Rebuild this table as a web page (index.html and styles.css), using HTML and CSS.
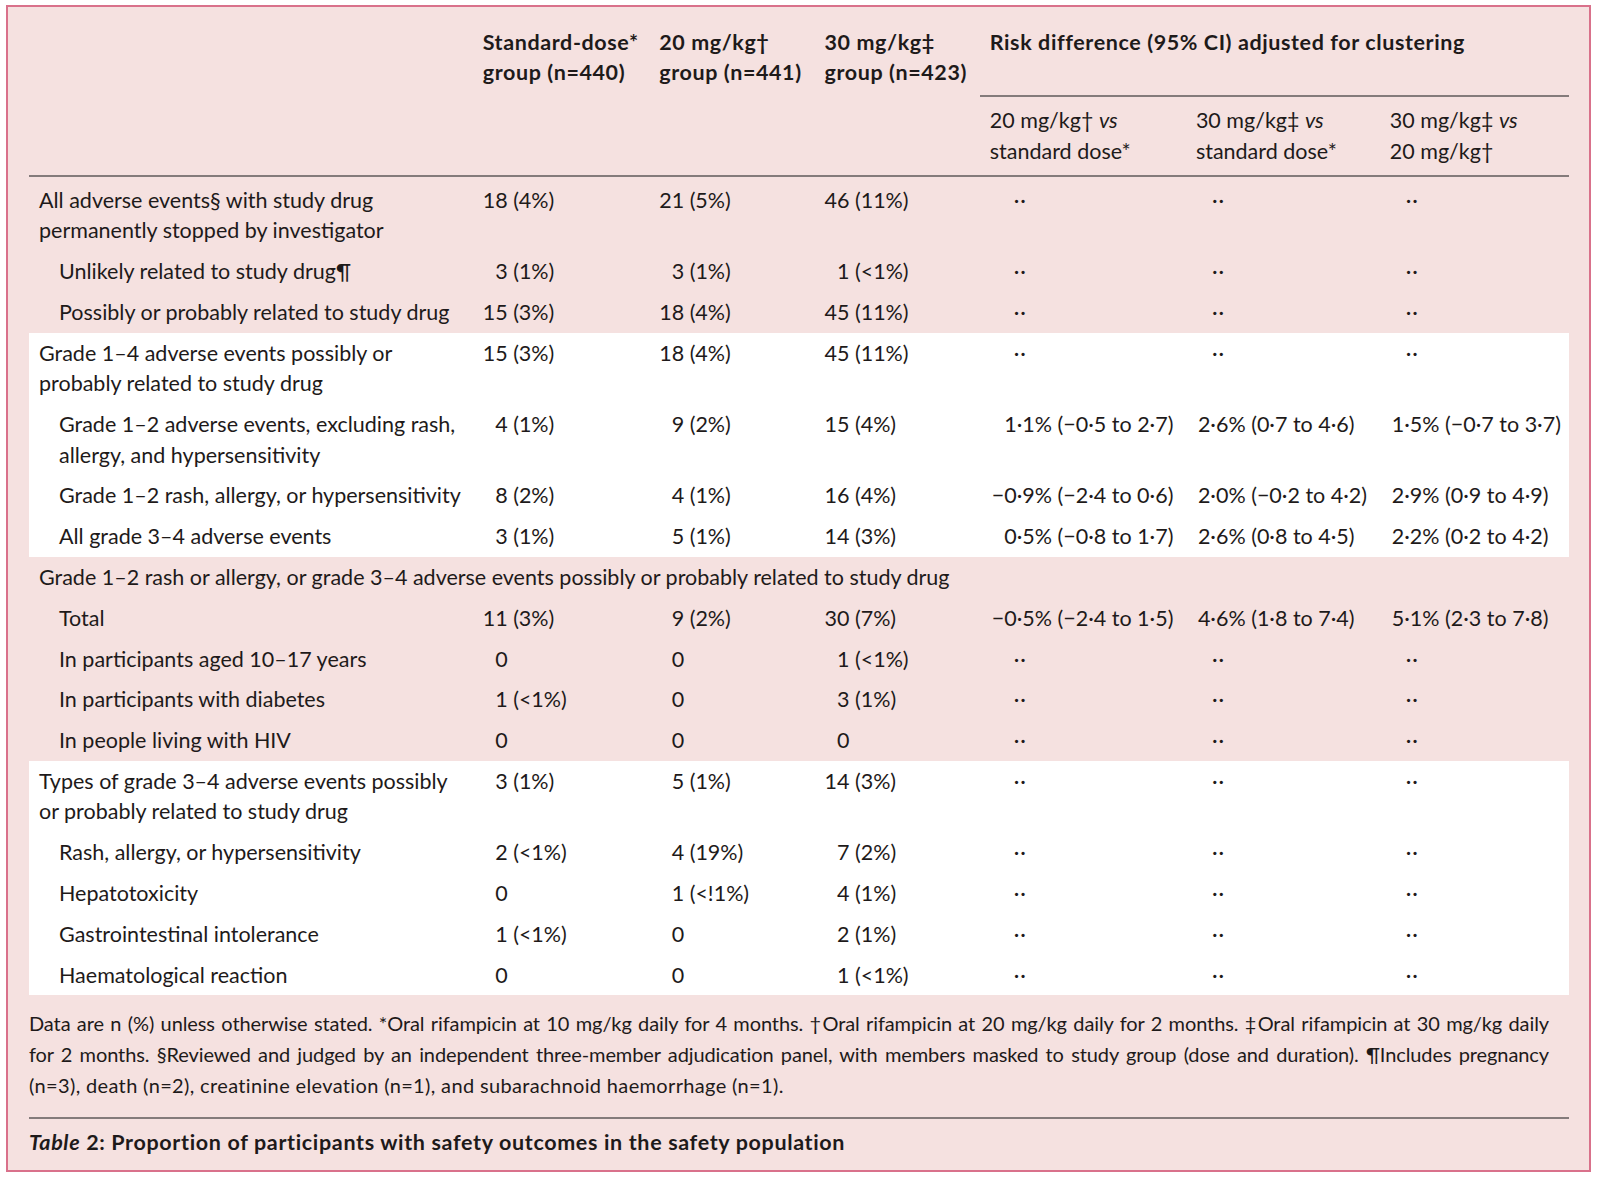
FILE: index.html
```html
<!DOCTYPE html>
<html lang="en">
<head>
<meta charset="utf-8">
<title>Table 2</title>
<link rel="stylesheet" href="styles.css">
</head>
<body>
<div class="frame">
  <table class="data">
    <colgroup>
      <col class="c1"><col class="c2"><col class="c3"><col class="c4"><col class="c5"><col class="c6"><col class="c7">
    </colgroup>
    <thead>
      <tr class="h1">
        <th rowspan="2" class="hl"></th>
        <th rowspan="2" class="hg">Standard-dose*<br>group (n=440)</th>
        <th rowspan="2" class="hg">20 mg/kg†<br>group (n=441)</th>
        <th rowspan="2" class="hg">30 mg/kg‡<br>group (n=423)</th>
        <th colspan="3" class="hr">Risk difference (95% CI) adjusted for clustering</th>
      </tr>
      <tr class="h2">
        <th class="hs">20 mg/kg† <i>vs</i><br>standard dose*</th>
        <th class="hs">30 mg/kg‡ <i>vs</i><br>standard dose*</th>
        <th class="hs">30 mg/kg‡ <i>vs</i><br>20 mg/kg†</th>
      </tr>
    </thead>
    <tbody>
      <tr class="first">
        <td class="lab">All adverse events§ with study drug<br>permanently stopped by investigator</td>
        <td>18 (4%)</td><td>21 (5%)</td><td>46 (11%)</td>
        <td class="d">··</td><td class="d">··</td><td class="d">··</td>
      </tr>
      <tr>
        <td class="lab sub">Unlikely related to study drug¶</td>
        <td class="i">3 (1%)</td><td class="i">3 (1%)</td><td class="i">1 (&lt;1%)</td>
        <td class="d">··</td><td class="d">··</td><td class="d">··</td>
      </tr>
      <tr>
        <td class="lab sub">Possibly or probably related to study drug</td>
        <td>15 (3%)</td><td>18 (4%)</td><td>45 (11%)</td>
        <td class="d">··</td><td class="d">··</td><td class="d">··</td>
      </tr>
      <tr class="w">
        <td class="lab">Grade 1–4 adverse events possibly or<br>probably related to study drug</td>
        <td>15 (3%)</td><td>18 (4%)</td><td>45 (11%)</td>
        <td class="d">··</td><td class="d">··</td><td class="d">··</td>
      </tr>
      <tr class="w">
        <td class="lab sub">Grade 1–2 adverse events, excluding rash,<br>allergy, and hypersensitivity</td>
        <td class="i">4 (1%)</td><td class="i">9 (2%)</td><td>15 (4%)</td>
        <td class="r i">1·1% (−0·5 to 2·7)</td><td class="r">2·6% (0·7 to 4·6)</td><td class="r">1·5% (−0·7 to 3·7)</td>
      </tr>
      <tr class="w">
        <td class="lab sub">Grade 1–2 rash, allergy, or hypersensitivity</td>
        <td class="i">8 (2%)</td><td class="i">4 (1%)</td><td>16 (4%)</td>
        <td class="r">−0·9% (−2·4 to 0·6)</td><td class="r">2·0% (−0·2 to 4·2)</td><td class="r">2·9% (0·9 to 4·9)</td>
      </tr>
      <tr class="w">
        <td class="lab sub">All grade 3–4 adverse events</td>
        <td class="i">3 (1%)</td><td class="i">5 (1%)</td><td>14 (3%)</td>
        <td class="r i">0·5% (−0·8 to 1·7)</td><td class="r">2·6% (0·8 to 4·5)</td><td class="r">2·2% (0·2 to 4·2)</td>
      </tr>
      <tr>
        <td class="lab" colspan="7">Grade 1–2 rash or allergy, or grade 3–4 adverse events possibly or probably related to study drug</td>
      </tr>
      <tr>
        <td class="lab sub">Total</td>
        <td>11 (3%)</td><td class="i">9 (2%)</td><td>30 (7%)</td>
        <td class="r">−0·5% (−2·4 to 1·5)</td><td class="r">4·6% (1·8 to 7·4)</td><td class="r">5·1% (2·3 to 7·8)</td>
      </tr>
      <tr>
        <td class="lab sub">In participants aged 10–17 years</td>
        <td class="i">0</td><td class="i">0</td><td class="i">1 (&lt;1%)</td>
        <td class="d">··</td><td class="d">··</td><td class="d">··</td>
      </tr>
      <tr>
        <td class="lab sub">In participants with diabetes</td>
        <td class="i">1 (&lt;1%)</td><td class="i">0</td><td class="i">3 (1%)</td>
        <td class="d">··</td><td class="d">··</td><td class="d">··</td>
      </tr>
      <tr>
        <td class="lab sub">In people living with HIV</td>
        <td class="i">0</td><td class="i">0</td><td class="i">0</td>
        <td class="d">··</td><td class="d">··</td><td class="d">··</td>
      </tr>
      <tr class="w">
        <td class="lab">Types of grade 3–4 adverse events possibly<br>or probably related to study drug</td>
        <td class="i">3 (1%)</td><td class="i">5 (1%)</td><td>14 (3%)</td>
        <td class="d">··</td><td class="d">··</td><td class="d">··</td>
      </tr>
      <tr class="w">
        <td class="lab sub">Rash, allergy, or hypersensitivity</td>
        <td class="i">2 (&lt;1%)</td><td class="i">4 (19%)</td><td class="i">7 (2%)</td>
        <td class="d">··</td><td class="d">··</td><td class="d">··</td>
      </tr>
      <tr class="w">
        <td class="lab sub">Hepatotoxicity</td>
        <td class="i">0</td><td class="i">1 (&lt;!1%)</td><td class="i">4 (1%)</td>
        <td class="d">··</td><td class="d">··</td><td class="d">··</td>
      </tr>
      <tr class="w">
        <td class="lab sub">Gastrointestinal intolerance</td>
        <td class="i">1 (&lt;1%)</td><td class="i">0</td><td class="i">2 (1%)</td>
        <td class="d">··</td><td class="d">··</td><td class="d">··</td>
      </tr>
      <tr class="w">
        <td class="lab sub">Haematological reaction</td>
        <td class="i">0</td><td class="i">0</td><td class="i">1 (&lt;1%)</td>
        <td class="d">··</td><td class="d">··</td><td class="d">··</td>
      </tr>
    </tbody>
  </table>
  <div class="notes">
    <span class="jl">Data are n (%) unless otherwise stated. *Oral rifampicin at 10 mg/kg daily for 4 months. †Oral rifampicin at 20 mg/kg daily for 2 months. ‡Oral rifampicin at 30 mg/kg daily</span>
    <span class="jl tight">for 2 months. §Reviewed and judged by an independent three-member adjudication panel, with members masked to study group (dose and duration). ¶Includes pregnancy</span>
    <span class="ll">(n=3), death (n=2), creatinine elevation (n=1), and subarachnoid haemorrhage (n=1).</span>
  </div>
  <div class="caption"><em>Table</em> 2: Proportion of participants with safety outcomes in the safety population</div>
</div>
</body>
</html>
```

FILE: styles.css
```css
html, body {
  margin: 0;
  padding: 0;
  background: #ffffff;
}

body {
  font-family: Lato, "Open Sans", sans-serif;
  color: #1e1a1a;
}

.frame {
  box-sizing: border-box;
  width: 1585px;
  margin: 5px 0 0 6px;
  border: 2px solid #d9718b;
  background: #f5e1e0;
  padding: 19.5px 20px 12.7px 21px;
}

.data {
  width: 1540px;
  table-layout: fixed;
  border-collapse: separate;
  border-spacing: 0;
  font-size: 21.5px;
  line-height: 30.6px;
}

.c1 { width: 443.7px; }
.c2 { width: 176.5px; }
.c3 { width: 165.3px; }
.c4 { width: 165.3px; }
.c5 { width: 206.1px; }
.c6 { width: 193.9px; }
.c7 { width: 189.2px; }

tr.h1 {
  height: 70.5px;
}

tr.h2 {
  height: 79.5px;
}

th {
  text-align: left;
  vertical-align: top;
  padding: 0 0 0 10px;
  white-space: nowrap;
}

.hl, .hg {
  border-bottom: 2px solid #847b7b;
  font-weight: 700;
  letter-spacing: 0.6px;
}

.hr {
  font-weight: 700;
  letter-spacing: 0.6px;
  padding-bottom: 7.3px;
  border-bottom: 2px solid #847b7b;
}

.hs {
  font-weight: 400;
  padding-top: 8px;
  padding-bottom: 8.3px;
  border-bottom: 2px solid #847b7b;
}

.hs i {
  font-style: italic;
}

td {
  padding: 5.1px 0 5.1px 10px;
  vertical-align: top;
  white-space: nowrap;
}

tr.first td {
  padding-top: 8.2px;
}

tr.w td {
  background: #ffffff;
}

td.lab.sub {
  padding-left: 30px;
}

td.i {
  padding-left: 22.5px;
}

td.r {
  padding-left: 12px;
}

td.r.i {
  padding-left: 24.5px;
}

td.d {
  padding-left: 26px;
  letter-spacing: 1px;
}

tr td.d:nth-child(5) {
  padding-left: 34px;
}

.notes {
  margin-top: 13.2px;
  font-size: 20px;
  line-height: 30.6px;
  width: 1520px;
}

.notes span {
  display: block;
  white-space: nowrap;
}

.notes .jl {
  text-align: justify;
  text-align-last: justify;
  letter-spacing: -0.1px;
}

.notes .tight {
  word-spacing: -2px;
}

.notes .ll {
  letter-spacing: 0.35px;
}

.caption {
  margin-top: 17px;
  border-top: 2px solid #847b7b;
  width: 1540px;
  padding-top: 7.7px;
  font-size: 21.5px;
  letter-spacing: 0.65px;
  line-height: 30.6px;
  font-weight: 700;
}

.caption em {
  font-style: italic;
}
```
